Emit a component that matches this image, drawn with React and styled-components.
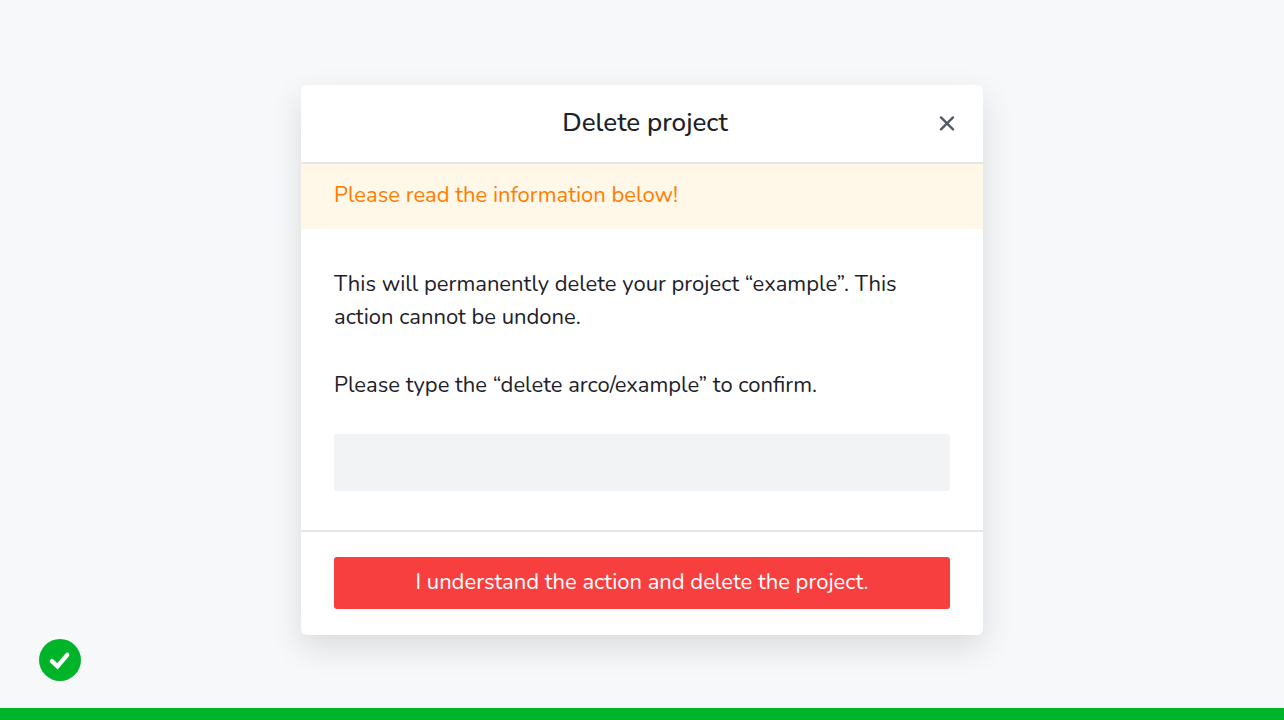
import React, { useState } from 'react';
import styled, { createGlobalStyle } from 'styled-components';

const GlobalStyle = createGlobalStyle`
  *, *::before, *::after { box-sizing: border-box; }
  body {
    margin: 0;
    background: #f7f8fa;
    color: #1d2129;
    font-family: Nunito, Lato, sans-serif;
    font-size: 22px;
    line-height: 33px;
  }
  button, input { font: inherit; }
`;

const Page = styled.main`
  min-height: 100vh;
  padding: 32px;
  display: flex;
  align-items: center;
  justify-content: center;
`;

const Dialog = styled.section`
  width: 100%;
  max-width: 682px;
  background: #fff;
  border-radius: 6px;
  box-shadow: 0 12px 32px rgba(0, 0, 0, 0.12);
`;

const Header = styled.header`
  display: grid;
  grid-template-columns: 32px 1fr 32px;
  align-items: center;
  padding: 21px 20px 23px 26px;
  border-bottom: 2px solid #e5e6e8;
`;

const Title = styled.h1`
  grid-column: 2;
  margin: 0;
  font-size: 26px;
  font-weight: 500;
  line-height: 33px;
  text-align: center;
`;

const CloseButton = styled.button`
  display: flex;
  align-items: center;
  justify-content: center;
  height: 33px;
  padding: 0;
  border: 0;
  background: none;
  color: #4e5969;
  cursor: pointer;
`;

const Notice = styled.p`
  margin: 0;
  padding: 15px 33px 17px;
  background: #fff7e8;
  color: #ff7d00;
`;

const Body = styled.div`
  padding: 39px 33px;
`;

const Message = styled.p`
  margin: 0 0 35px;
`;

const Label = styled.label`
  display: block;
  margin-bottom: 32px;
`;

const ConfirmInput = styled.input`
  display: block;
  width: 100%;
  height: 57px;
  padding: 0 16px;
  border: 0;
  border-radius: 3px;
  background: #f2f3f5;
  color: inherit;
`;

const Footer = styled.footer`
  padding: 25px 33px 26px;
  border-top: 2px solid #e5e6e8;
`;

const DangerButton = styled.button`
  display: block;
  width: 100%;
  padding: 9px 16px 10px;
  border: 0;
  border-radius: 3px;
  background: #f73f3f;
  color: #fff;
  cursor: pointer;
`;

const Badge = styled.svg`
  position: fixed;
  left: 39px;
  bottom: 39px;
  width: 42px;
  height: 42px;
`;

const BottomBar = styled.div`
  position: fixed;
  left: 0;
  right: 0;
  bottom: 0;
  height: 12px;
  background: #00b42a;
`;

export default function App() {
  const [value, setValue] = useState('');

  return (
    <>
      <GlobalStyle />
      <Page>
        <Dialog role="dialog" aria-labelledby="dialog-title">
          <Header>
            <Title id="dialog-title">Delete project</Title>
            <CloseButton type="button" aria-label="Close">
              <svg width="16" height="16" viewBox="0 0 16 16" fill="none" stroke="currentColor" strokeWidth="2.3" strokeLinecap="round">
                <path d="M2 2.4 14 14.4M14 2.4 2 14.4" />
              </svg>
            </CloseButton>
          </Header>
          <Notice>Please read the information below!</Notice>
          <Body>
            <Message>This will permanently delete your project “example”. This action cannot be undone.</Message>
            <Label htmlFor="confirm">Please type the “delete arco/example” to confirm.</Label>
            <ConfirmInput id="confirm" type="text" value={value} onChange={(e) => setValue(e.target.value)} />
          </Body>
          <Footer>
            <DangerButton type="button">I understand the action and delete the project.</DangerButton>
          </Footer>
        </Dialog>
      </Page>
      <Badge viewBox="0 0 42 42" role="img" aria-label="Success">
        <circle cx="21" cy="21" r="21" fill="#00b42a" />
        <path d="M12.9 22.2 18.5 27.4 28.2 15.8" fill="none" stroke="#fff" strokeWidth="4.4" strokeLinecap="round" />
      </Badge>
      <BottomBar />
    </>
  );
}
